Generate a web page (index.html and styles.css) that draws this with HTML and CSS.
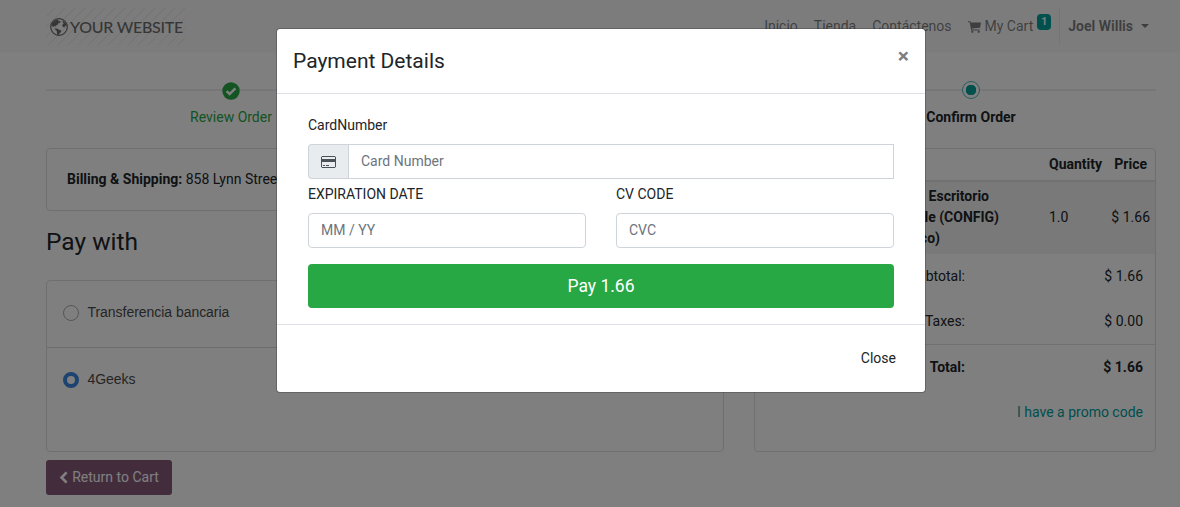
FILE: index.html
```html
<!DOCTYPE html>
<html lang="es">
<head>
<meta charset="utf-8">
<title>Payment</title>
<link rel="stylesheet" href="styles.css">
</head>
<body>
<header class="navbar">
  <div class="container navbar-inner">
    <a class="brand">
      <svg class="globe" viewBox="0 0 18 18"><circle cx="9" cy="9" r="8.300" fill="none" stroke="#6c6c6c" stroke-width="1.200"/><path fill="#6c6c6c" d="M2 5.500 4.200 3 7 1.600l1.600.5-.4 1.100 1.500-.3 1 .8-1.200 1.200-1.200.3-.5 1.200-1.500.8-.6 1.300-1.300-.5-.9.5.2 1.100 1 .1.500 1.100 1.200-.3 1.700.4 1.400 1.100 1.700.5-.4 1.700-1.200.9-.7 1.500-1.300.7-.6-2.100-.2-2.100-1.500-1.400-1-2L1.800 8zM12.500 2.800l1.800 1 1.500 1.800.6 2-1.300.3-.8 1.500-1.200-.5-.9-1.500.7-1.500 1-.3-1.200-1z"/></svg>
      <span>YOUR WEBSITE</span>
    </a>
    <nav class="nav">
      <a>Inicio</a>
      <a>Tienda</a>
      <a>Contáctenos</a>
      <a class="cart-link"><svg class="cart" viewBox="0 0 13 12"><path fill="currentColor" d="M0 .3h2.300l.5 1.200H13L12.100 6.700 4 7.600l.2.800h7.500v1H3.200L1.700 1.300H0z"/><circle cx="4.300" cy="10.800" r="1.100" fill="currentColor"/><circle cx="10.700" cy="10.800" r="1.100" fill="currentColor"/></svg><span>My Cart</span><sup class="badge">1</sup></a>
      <a class="user">Joel Willis<i class="caret"></i></a>
    </nav>
  </div>
</header>
<main class="container">
  <div class="wizard">
    <div class="step done">
      <svg class="mark" viewBox="0 0 18 18"><circle cx="9" cy="9" r="8.700" fill="#28a745"/><path d="m4.600 9.100 3 3 5.800-5.800" fill="none" stroke="#fff" stroke-width="2.500"/></svg>
      <span>Review Order</span>
    </div>
    <div class="step"></div>
    <div class="step current"><i class="mark dot"></i><span>Confirm Order</span></div>
  </div>
  <div class="columns">
    <section class="left">
      <div class="card address"><b>Billing &amp; Shipping:</b> 858 Lynn Street</div>
      <h3>Pay with</h3>
      <div class="card methods">
        <label class="method"><i class="radio"></i>Transferencia bancaria</label>
        <label class="method"><i class="radio checked"></i>4Geeks</label>
      </div>
      <a class="return"><svg viewBox="0 0 9 13"><path d="M7.600 1.400 2.600 6.500l5 5.100" fill="none" stroke="currentColor" stroke-width="2.700"/></svg>Return to Cart</a>
    </section>
    <section class="card summary">
      <div class="row head"><span></span><span>Quantity</span><span class="amount">Price</span></div>
      <div class="row item"><b><span class="line-first">Escritorio</span><span>personalizable (CONFIG)</span><span class="line-last">(Blanco)</span></b><span>1.0</span><span class="amount">$ 1.66</span></div>
      <div class="total"><span>Subtotal:</span><span>$ 1.66</span></div>
      <div class="total"><span>Taxes:</span><span>$ 0.00</span></div>
      <div class="total grand"><span>Total:</span><span>$ 1.66</span></div>
      <a class="promo">I have a promo code</a>
    </section>
  </div>
</main>
<div class="backdrop">
  <div class="modal">
    <div class="modal-header"><h4>Payment Details</h4><span class="close">×</span></div>
    <form class="modal-body">
      <label>CardNumber</label>
      <div class="group">
        <span class="addon"><svg viewBox="0 0 15 12"><path fill="none" stroke="currentColor" d="M1 .5h13l.5.5v10l-.5.5H1l-.5-.5V1z"/><path fill="currentColor" d="M.5 3h14v3H.5zM2 9h2v1H2zM5 9h3v1H5z"/></svg></span>
        <input class="control" placeholder="Card Number">
      </div>
      <div class="pair">
        <div><label>EXPIRATION DATE</label><input class="control" placeholder="MM / YY"></div>
        <div><label>CV CODE</label><input class="control" placeholder="CVC"></div>
      </div>
      <button class="pay" type="button">Pay 1.66</button>
    </form>
    <div class="modal-footer"><span>Close</span></div>
  </div>
</div>
</body>
</html>
```
FILE: styles.css
```css
* { box-sizing: border-box; }
body {
  margin: 0;
  height: 507px;
  overflow: hidden;
  position: relative;
  background: #fff;
  color: #212529;
  font: 14px/21px Roboto, sans-serif;
}
.container { width: 1110px; margin-left: 46px; }

.navbar { height: 53px; background: #f8f9fa; border-bottom: 1px solid #fafafb; }
.navbar-inner { display: flex; justify-content: space-between; padding-top: 8px; }
.brand {
  display: flex;
  align-items: center;
  width: 139px;
  height: 37px;
  padding-left: 4px;
  background: repeating-linear-gradient(135deg, transparent 0 6.200px, #e6e7e7 6.200px 7.070px);
  color: #6c6c6c;
  font: 500 16px/22px Lato, sans-serif;
  letter-spacing: -.28px;
  white-space: nowrap;
}
.globe { flex: none; width: 18px; height: 18px; margin-right: 2px; }
.nav { display: flex; color: rgba(0, 0, 0, .5); }
.nav a { padding: 7.500px 8px; white-space: nowrap; }
.nav .cart-link { display: flex; padding-right: 8px; }
.cart { flex: none; width: 13px; height: 12px; margin: 5px 4px 0 0; }
.badge {
  width: 14px;
  height: 16px;
  margin: -2px 0 0 4px;
  border-radius: 4px;
  background: #00a09d;
  color: #fff;
  font: 700 10.500px/16px Roboto, sans-serif;
  text-align: center;
}
.nav .user { height: 36px; border-left: 1px solid #e9ebed; font-weight: 700; display: flex; padding-right: 7px; }
.caret { margin: 8px 0 0 8px; height: 4px; border: 4px solid transparent; border-top-color: currentColor; border-bottom: 0; }

.wizard {
  display: flex;
  height: 58px;
  margin-top: 36px;
  border-top: 2px solid #e9ecef;
}
.step { flex: 1; display: flex; flex-direction: column; align-items: center; }
.mark { width: 18px; height: 18px; margin: -9px 0 7px; }
.done { color: #28a745; }
.current { font-weight: 700; }
.dot { width: 18px; height: 18px; margin: -10px 0 8px; border-radius: 50%; border: 1px solid #4dbdba; background: radial-gradient(circle, #00a09d 5px, #fff 5.500px); }

.columns { display: grid; grid-template-columns: 678px 402px; gap: 30px; margin-top: 1px; }
.card { border: 1px solid #dfdfdf; border-radius: 4px; }
.address { height: 63px; padding: 20px; }
h3 { margin: 16px 0 24px; font-size: 24.500px; font-weight: 400; line-height: 29px; }
.methods { height: 172px; }
.method {
  display: flex;
  align-items: center;
  height: 67px;
  padding: 0 16px 3px;
  color: #4b4b4b;
  font-family: "Liberation Sans", sans-serif;
  letter-spacing: -.04px;
  border-bottom: 1px solid #d9d9d9;
}
.method + .method { border-bottom: 0; padding-bottom: 5px; }
.radio { width: 16px; height: 16px; margin: 1px 8.500px 0 0; border: 1px solid #adadad; border-radius: 50%; }
.radio.checked { border: 4px solid #3b86e0; }
.return {
  display: inline-flex;
  align-items: center;
  justify-content: center;
  width: 126px;
  height: 35px;
  margin-top: 8px;
  border-radius: 3px;
  background: #875a7b;
  color: #fff;
}
.return svg { width: 9px; height: 13px; margin-right: 4px; }

.summary { height: 304px; }
.row { display: grid; grid-template-columns: 294px 50px 1fr; align-items: center; }
.head { height: 33px; border-bottom: 2px solid #dee2e6; font-weight: 700; }
.item { height: 72px; padding-bottom: 2px; background: #f2f2f2; }
.item b { width: 244px; text-align: right; }
.item b span { display: block; }
.item .line-first { padding-right: 10px; }
.item .line-last { padding-right: 59px; }
.amount { text-align: right; padding-right: 8px; }
.item .amount { padding-right: 5px; }
.total { display: grid; grid-template-columns: 210px 1fr; height: 45px; padding: 12px 12px 0 0; text-align: right; }
.grand { border-top: 1px solid #dee2e6; font-weight: 700; }
.promo { display: block; padding: 13px 12px 0; color: #00a09d; text-align: right; }

.backdrop { position: absolute; inset: 0; background: rgba(0, 0, 0, .5); }
.modal {
  width: 650px;
  height: 365px;
  margin: 28px 0 0 276px;
  border: 1px solid rgba(0, 0, 0, .2);
  border-radius: 4px;
  background: #fff;
  background-clip: padding-box;
}
.modal-header { display: flex; justify-content: space-between; height: 65px; padding: 16px; border-bottom: 1px solid #dee2e6; }
h4 { margin: 0; font-size: 21px; font-weight: 400; line-height: 32px; }
.close { font-size: 21px; font-weight: 700; line-height: 22px; color: #7f7f7f; }
.modal-body { height: 230px; padding: 21px 31px 16px; }
.modal-body label { display: block; margin-bottom: 8px; }
.group { display: flex; margin-bottom: 5px; }
.addon { display: flex; align-items: flex-start; width: 40px; padding: 11px 0 0 12px; background: #e9ecef; border: 1px solid #ced4da; border-right: 0; border-radius: 4px 0 0 4px; color: #495057; }
.addon svg { width: 15px; height: 12px; }
.control { display: block; width: 100%; height: 35px; padding: 0 12px 2px; border: 1px solid #ced4da; border-radius: 4px; background: #fff; font: 14px/21px Roboto, sans-serif; }
.control::placeholder { color: #6c757d; opacity: 1; }
.group .control { flex: 1; border-radius: 0; }
.pair { display: grid; grid-template-columns: 1fr 1fr; gap: 30px; }
.pay { width: 100%; height: 44px; margin-top: 16px; border: 0; border-radius: 4px; background: #28a745; color: #fff; font: 17.500px/26px Roboto, sans-serif; }
.modal-footer { padding: 23px 29px; border-top: 1px solid #dee2e6; text-align: right; }
```
